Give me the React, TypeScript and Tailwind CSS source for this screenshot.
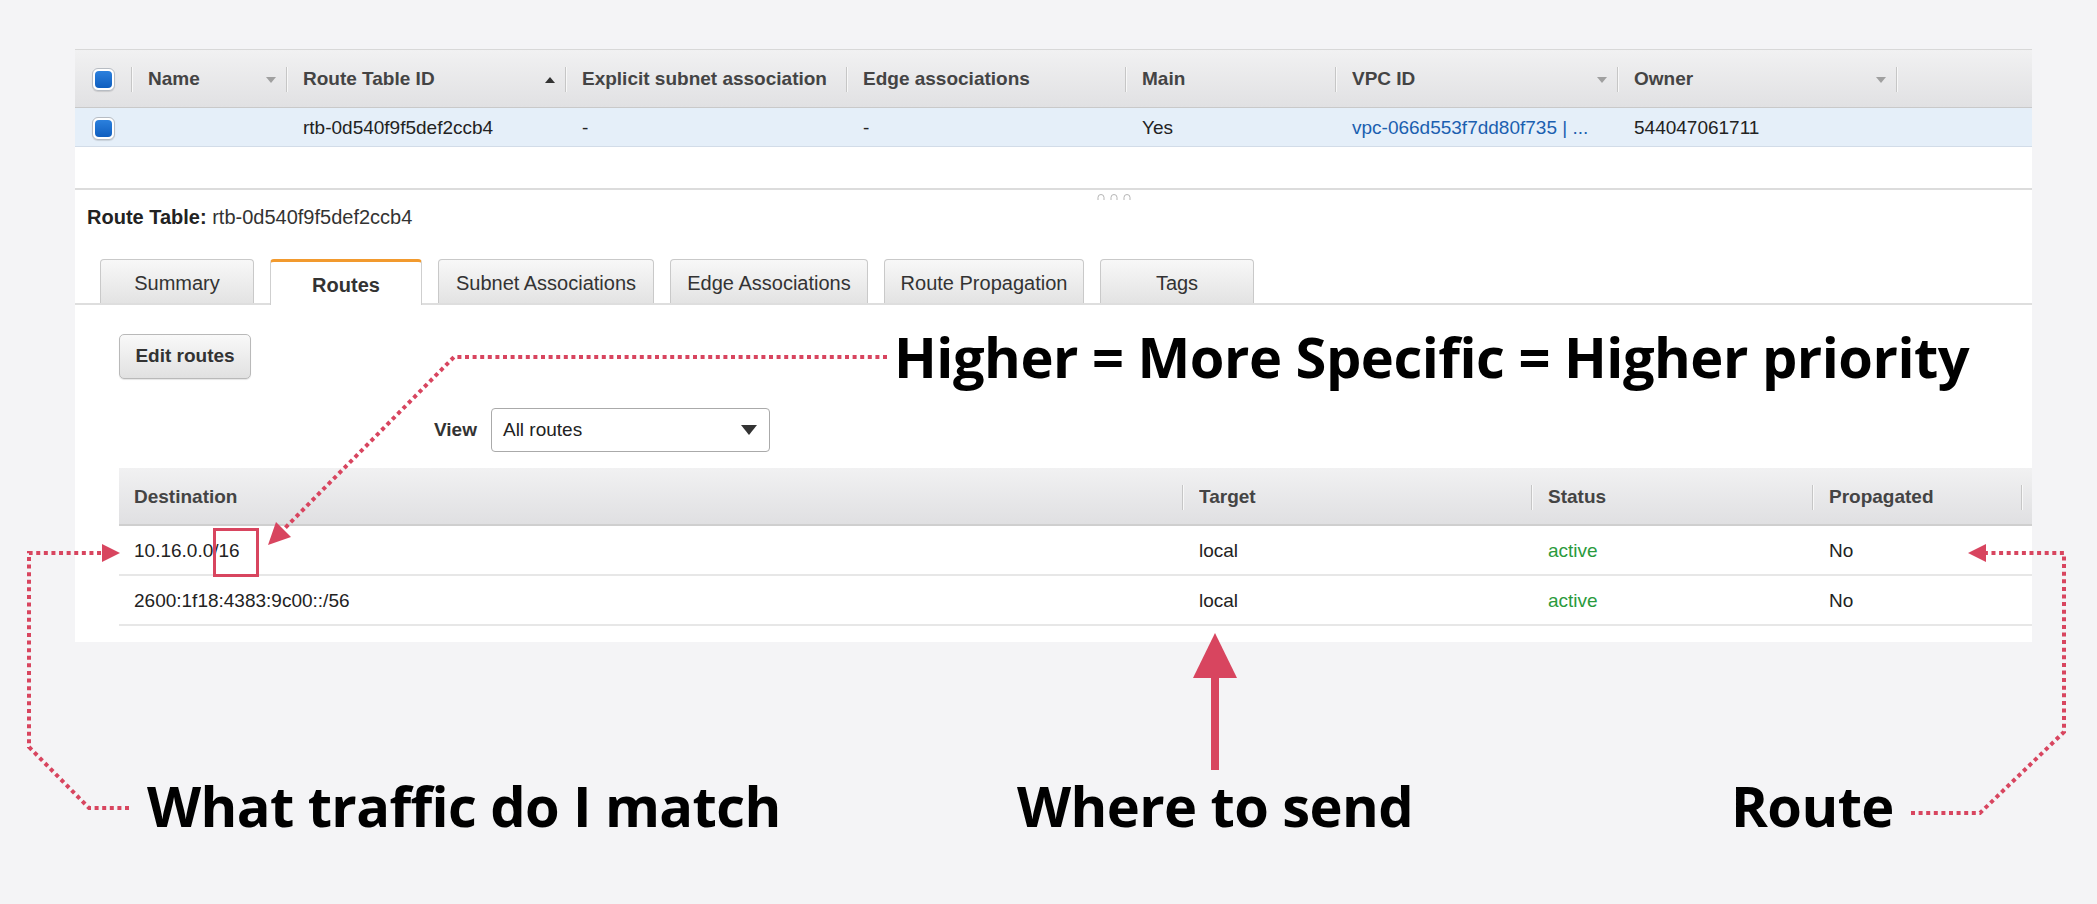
import React from 'react';

const RED = '#d8455f';

// small sort caret in table headers
const Caret = ({ up = false }: { up?: boolean }) => (
  <svg width="10" height="6" viewBox="0 0 10 6" className="shrink-0">
    <path d={up ? 'M0 6 L5 0 L10 6 Z' : 'M0 0 L5 6 L10 0 Z'} fill={up ? '#333' : '#a0a0a0'} />
  </svg>
);

const Checkbox = () => (
  <div className="h-[23px] w-[23px] rounded-[6px] border border-[#b7bcc3] bg-white p-[2px] shadow-[0_1px_1px_rgba(0,0,0,0.12)]">
    <div className="h-full w-full rounded-[4px] bg-linear-to-b from-[#2b80dd] to-[#0e5ebf]" />
  </div>
);

const Sep = ({ h = 'h-[25px]' }: { h?: string }) => (
  <div className={`w-px shrink-0 bg-[#c6c6c6] shadow-[1px_0_0_#f8f8f8] ${h}`} />
);

type HeadProps = { label?: string; sort?: 'up' | 'down'; pl?: string };

const HeadCell = ({ label, sort, pl = 'pl-[16px]' }: HeadProps) => (
  <div className="flex h-full min-w-0 items-center">
    <div className={`flex min-w-0 flex-1 items-center pr-[10px] ${pl}`}>
      <span className="min-w-0 flex-1 overflow-hidden whitespace-nowrap">{label}</span>
      {sort && <Caret up={sort === 'up'} />}
    </div>
    <Sep />
  </div>
);

const tabs = [
  { label: 'Summary', w: 'w-[154px]' },
  { label: 'Routes', w: 'w-[152px]', active: true },
  { label: 'Subnet Associations', w: 'w-[216px]' },
  { label: 'Edge Associations', w: 'w-[198px]' },
  { label: 'Route Propagation', w: 'w-[200px]' },
  { label: 'Tags', w: 'w-[154px]' },
];

const routes = [
  { dest: '10.16.0.0/16', target: 'local', status: 'active', prop: 'No' },
  { dest: '2600:1f18:4383:9c00::/56', target: 'local', status: 'active', prop: 'No' },
];

// dotted callout lines, arrows and the red box
const Overlay = () => (
  <svg
    className="pointer-events-none absolute left-0 top-0"
    width="2097"
    height="904"
    viewBox="0 0 2097 904"
  >
    <g fill="none" stroke={RED} strokeWidth={4} strokeDasharray="4 3.6">
      <polyline points="887,357 454,357 284,529" />
      <polyline points="129,808 89,808 29,747 29,553 103,553" />
      <polyline points="1911,813 1980,813 2064,732 2064,553 1986,553" />
    </g>
    <polygon points="268,545 291,537 276,522" fill={RED} />
    <polygon points="120,553 102,544 102,562" fill={RED} />
    <polygon points="1968,553 1986,544 1986,562" fill={RED} />
    <rect x="214.5" y="529.5" width="43" height="46" fill="none" stroke={RED} strokeWidth={3} />
    <polygon points="1215,633 1193,678 1237,678" fill={RED} />
    <rect x="1211" y="676" width="8" height="94" fill={RED} />
  </svg>
);

export default function App() {
  return (
    <div className="relative h-[904px] w-full overflow-hidden bg-[#f4f4f6] pt-[49px] font-['Liberation_Sans',Arial,sans-serif]">
      <div className="ml-[75px] w-[1957px] bg-white pb-[16px]">
        {/* Route tables list */}
        <div className="grid h-[59px] grid-cols-[57px_155px_279px_281px_279px_210px_282px_279px_1fr] border-b border-t border-b-[#c9c9c9] border-t-[#d8d8d8] bg-linear-to-b from-[#f1f1f2] to-[#e1e1e3] pt-[2px] text-[19px] font-bold text-[#444]">
          <div className="flex h-full items-center">
            <div className="flex flex-1 justify-center">
              <Checkbox />
            </div>
            <Sep />
          </div>
          <HeadCell label="Name" sort="down" />
          <HeadCell label="Route Table ID" sort="up" />
          <HeadCell label="Explicit subnet association" />
          <HeadCell label="Edge associations" />
          <HeadCell label="Main" />
          <HeadCell label="VPC ID" sort="down" />
          <HeadCell label="Owner" sort="down" />
          <div />
        </div>
        <div className="grid h-[39px] grid-cols-[57px_155px_279px_281px_279px_210px_282px_279px_1fr] items-center border-b border-[#d2dce8] bg-[#e5eff9] pt-[2px] text-[19px] text-[#222]">
          <div className="flex justify-center pr-px">
            <Checkbox />
          </div>
          <div />
          <div className="pl-[16px]">rtb-0d540f9f5def2ccb4</div>
          <div className="pl-[16px]">-</div>
          <div className="pl-[16px]">-</div>
          <div className="pl-[16px]">Yes</div>
          <div className="whitespace-nowrap pl-[16px] text-[#1b5fb0]">vpc-066d553f7dd80f735 | ...</div>
          <div className="pl-[16px]">544047061711</div>
          <div />
        </div>
        <div className="h-[41px]" />
        <div className="h-[2px] bg-[#dcdcdc]" />

        {/* resize handle */}
        <div className="flex h-[14px] items-center pl-[1022px]">
          <svg width="34" height="6" viewBox="0 0 34 6">
            <g fill="none" stroke="#b5b5b5" strokeWidth={1}>
              <path d="M1 6 V3.5 a3 3 0 0 1 6 0 V6" />
              <path d="M14 6 V3.5 a3 3 0 0 1 6 0 V6" />
              <path d="M27 6 V3.5 a3 3 0 0 1 6 0 V6" />
            </g>
          </svg>
        </div>

        <div className="mt-[1px] h-[24px] pl-[12px] text-[20px] leading-[24px] text-[#333]">
          <span className="font-bold text-[#222]">Route Table:</span> rtb-0d540f9f5def2ccb4
        </div>

        {/* Tabs */}
        <div className="mt-[30px] flex h-[46px] items-end gap-[16px] border-b-2 border-[#dedede] pl-[25px] text-[20px] text-[#333]">
          {tabs.map((t) =>
            t.active ? (
              <div
                key={t.label}
                className={`-mb-[2px] flex h-[46px] items-center justify-center rounded-t-[4px] border border-b-0 border-[#cfcfcf] border-t-[3px] border-t-[#f29a2e] bg-white pt-[2px] font-bold ${t.w}`}
              >
                {t.label}
              </div>
            ) : (
              <div
                key={t.label}
                className={`flex h-[44px] items-center justify-center rounded-t-[4px] border border-b-0 border-[#c9c9c9] bg-linear-to-b from-[#f8f8f8] to-[#e3e3e3] pt-[2px] ${t.w}`}
              >
                {t.label}
              </div>
            )
          )}
        </div>

        <button className="ml-[44px] mt-[29px] flex h-[45px] w-[132px] items-center justify-center rounded-[5px] border border-[#b9b9b9] bg-linear-to-b from-[#f9f9f9] to-[#e1e1e1] text-[19px] font-bold text-[#333] shadow-[0_1px_1px_rgba(0,0,0,0.1)]">
          Edit routes
        </button>

        <div className="mt-[29px] flex h-[44px] items-center gap-[14px] pl-[359px] text-[19px]">
          <span className="font-bold text-[#333]">View</span>
          <div className="flex h-[44px] w-[279px] items-center justify-between rounded-[4px] border border-[#aaa] pl-[11px] pr-[12px] text-[#222]">
            <span>All routes</span>
            <svg width="16" height="10" viewBox="0 0 16 10">
              <path d="M0 0 H16 L8 10 Z" fill="#333" />
            </svg>
          </div>
        </div>

        {/* Routes table */}
        <div className="ml-[44px] mt-[16px] text-[19px]">
          <div className="grid h-[58px] grid-cols-[1064px_349px_281px_209px_1fr] border-b-2 border-[#cfcfcf] bg-linear-to-b from-[#f1f1f2] to-[#e0e0e2] pt-[2px] font-bold text-[#444]">
            <HeadCell label="Destination" pl="pl-[15px]" />
            <HeadCell label="Target" />
            <HeadCell label="Status" />
            <HeadCell label="Propagated" />
            <div />
          </div>
          {routes.map((r) => (
            <div
              key={r.dest}
              className="grid h-[50px] grid-cols-[1064px_349px_281px_209px_1fr] items-center border-b-2 border-[#e7e7e7] pt-[2px] text-[#222]"
            >
              <div className="pl-[15px]">{r.dest}</div>
              <div className="pl-[16px]">{r.target}</div>
              <div className="pl-[16px] text-[#2a9a3c]">{r.status}</div>
              <div className="pl-[16px]">{r.prop}</div>
              <div />
            </div>
          ))}
        </div>
      </div>

      {/* Bottom labels */}
      <div className="mt-[135px] grid grid-cols-[870px_714px_auto] pl-[147px] font-['Open_Sans',sans-serif] text-[56px] font-bold leading-[56px] tracking-[-0.6px] text-black">
        <span>What traffic do I match</span>
        <span>Where to send</span>
        <span>Route</span>
      </div>

      <div className="absolute left-[894px] top-[328px] whitespace-nowrap font-['Open_Sans',sans-serif] text-[56px] font-bold leading-[56px] tracking-[-0.5px] text-black">
        Higher = More Specific = Higher priority
      </div>

      <Overlay />
    </div>
  );
}
